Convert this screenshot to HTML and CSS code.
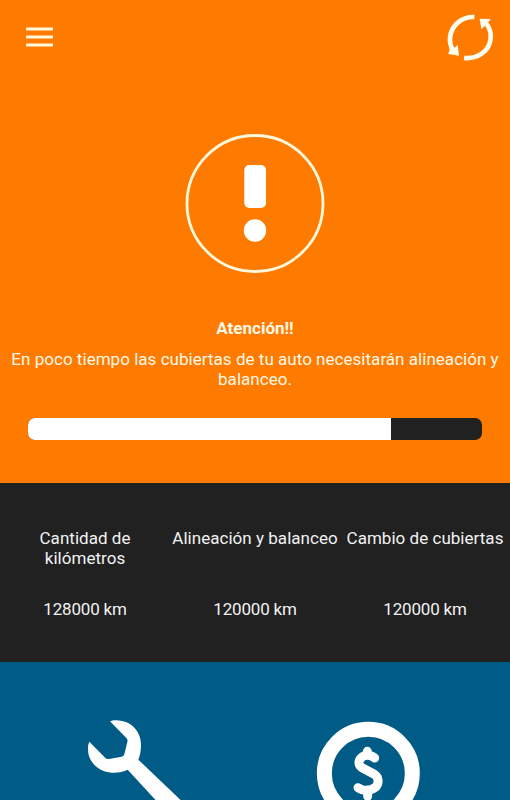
FILE: index.html
```
<!DOCTYPE html>
<html lang="es">
<head>
<meta charset="utf-8">
<title>Estado del auto</title>
<link rel="stylesheet" href="styles.css">
</head>
<body>
<main class="screen">
  <section class="alert">
    <header class="topbar">
      <svg class="menu" viewBox="0 0 27 20"><path d="M0 2h27M0 10h27M0 18h27"/></svg>
      <svg class="refresh" viewBox="0 0 210 195">
        <path class="arc" d="M118 36C82 34 48 60 45 99C44 112 47 124 53 136M87 159C127 163 165 139 167 98C168 82 163 66 152 54"/>
        <path class="head" d="M40 147L72 152L68 120L57 129L44 132ZM134 41L167 42L159 53L149 63L139 73Z"/>
      </svg>
    </header>
    <svg class="warning" viewBox="0 0 140 140">
      <circle class="ring" cx="70" cy="69.500" r="68"/>
      <rect x="59.300" y="31" width="21.700" height="43" rx="5"/>
      <circle cx="70" cy="96.500" r="11.200"/>
    </svg>
    <h1 class="title">Atención!!</h1>
    <p class="message">En poco tiempo las cubiertas de tu auto necesitarán alineación y balanceo.</p>
    <div class="progress"><div class="fill"></div></div>
  </section>
  <section class="stats">
    <div class="stat"><h2>Cantidad de kilómetros</h2><p>128000 km</p></div>
    <div class="stat"><h2>Alineación y balanceo</h2><p>120000 km</p></div>
    <div class="stat"><h2>Cambio de cubiertas</h2><p>120000 km</p></div>
  </section>
  <nav class="actions">
    <svg class="tool" viewBox="0 0 375 375">
      <path d="M105 49C115 43 142 45 158 53C184 66 198 91 198 119C198 137 195 151 190 164L370 336L316 366L158 194C145 201 128 204 110 203C78 201 50 181 41 150C38 136 38 119 43 110L92 160Q96 163 102 162L140 155Q147 154 148 148L157 111Q159 104 154 99Z"/>
    </svg>
    <svg class="coin" viewBox="0 0 375 375">
      <circle class="rim" cx="190" cy="205" r="132"/>
      <path class="dollar" d="M187 139V150M209 159C199 149 180 147 170 157C158 168 160 181 171 188L208 208C222 217 223 236 211 247C196 259 174 259 159 248M188 255V274"/>
    </svg>
  </nav>
</main>
</body>
</html>
```
FILE: styles.css
```
* {
  box-sizing: border-box;
}

body {
  margin: 0;
  font-family: Roboto, sans-serif;
  font-size: 17px;
  line-height: 20px;
  text-align: center;
}

h1,
h2,
p {
  margin: 0;
  font-size: inherit;
}

svg {
  display: block;
  fill: #fff;
  flex: none;
}

.screen {
  display: flex;
  flex-direction: column;
  height: 800px;
  overflow: hidden;
}

.alert {
  display: flex;
  flex-direction: column;
  align-items: center;
  height: 483px;
  background: #ff7b00;
  color: #fff8e6;
}

.topbar {
  display: flex;
  justify-content: space-between;
  align-self: stretch;
  height: 134px;
  padding: 5px 5px 0 26px;
}

.menu {
  width: 27px;
  height: 20px;
  margin-top: 22px;
  fill: none;
  stroke: #fff8dc;
  stroke-width: 3;
}

.refresh {
  width: 70px;
  height: 65px;
}

.refresh .arc {
  fill: none;
  stroke: #fffdf0;
  stroke-width: 14;
}

.refresh .head {
  fill: #fffdf0;
}

.warning {
  width: 140px;
  height: 140px;
}

.warning .ring {
  fill: none;
  stroke: #fff8dc;
  stroke-width: 2.8;
}

.title {
  margin-top: 44px;
  font-weight: 700;
}

.message {
  align-self: stretch;
  margin-top: 11px;
  padding: 0 8px;
  letter-spacing: 0.03px;
}

.progress {
  width: 454px;
  height: 22px;
  margin-top: 29px;
  border-radius: 7px;
  overflow: hidden;
  background: #212121;
}

.fill {
  width: 80%;
  height: 100%;
  background: #fff;
}

.stats {
  display: grid;
  grid-template-columns: repeat(3, 1fr);
  height: 179px;
  padding-top: 45px;
  background: #212121;
  color: #f2f2f2;
}

.stat h2 {
  height: 71px;
  font-weight: 400;
  letter-spacing: 0.03px;
}

.stat p {
  letter-spacing: -0.2px;
}

.stat:first-child h2 {
  padding: 0 30px;
}

.actions {
  display: flex;
  flex: 1;
  gap: 105px;
  padding: 43px 0 0 75px;
  background: #005c87;
  overflow: hidden;
}

.tool,
.coin {
  width: 125px;
  height: 125px;
}

.coin .rim {
  fill: none;
  stroke: #fff;
  stroke-width: 45;
}

.coin .dollar {
  fill: none;
  stroke: #fff;
  stroke-width: 27;
  stroke-linecap: round;
  stroke-linejoin: round;
}
```
